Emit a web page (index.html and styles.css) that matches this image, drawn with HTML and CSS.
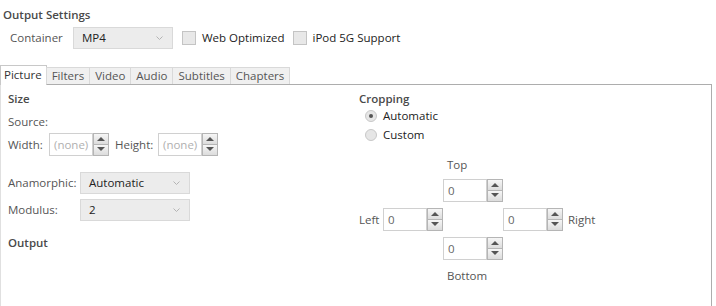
FILE: index.html
```html
<!DOCTYPE html>
<html lang="en">
<head>
    <meta charset="UTF-8">
    <title>Output Settings</title>
    <link rel="stylesheet" href="styles.css">
</head>
<body>
    <div class="settings-title">Output Settings</div>
    <div class="output-row">
        <span class="container-label">Container</span>
        <div class="combo combo-container">
            <span>MP4</span>
            <svg class="chevron" width="7" height="4" viewBox="0 0 7 4"><polyline points="0.5,0.5 3.5,3.5 6.5,0.5" fill="none" stroke="#b4b4b4" stroke-width="1"/></svg>
        </div>
        <label class="check"><span class="box"></span>Web Optimized</label>
        <label class="check"><span class="box"></span>iPod 5G Support</label>
    </div>

    <div class="tabs">
        <div class="tab active">Picture</div>
        <div class="tab">Filters</div>
        <div class="tab">Video</div>
        <div class="tab">Audio</div>
        <div class="tab">Subtitles</div>
        <div class="tab">Chapters</div>
    </div>

    <div class="panel">
        <div class="col-left">
            <div class="heading">Size</div>
            <div class="label source">Source:</div>
            <div class="size-row">
                <span class="label">Width:</span>
                <div class="spinner">
                    <div class="spin-input placeholder">(none)</div>
                    <div class="spin-btns"><span class="up"></span><span class="down"></span></div>
                </div>
                <span class="label height-label">Height:</span>
                <div class="spinner">
                    <div class="spin-input placeholder">(none)</div>
                    <div class="spin-btns"><span class="up"></span><span class="down"></span></div>
                </div>
            </div>
            <div class="combo-row first">
                <span class="label">Anamorphic:</span>
                <div class="combo combo-wide">
                    <span>Automatic</span>
                    <svg class="chevron" width="7" height="4" viewBox="0 0 7 4"><polyline points="0.5,0.5 3.5,3.5 6.5,0.5" fill="none" stroke="#b4b4b4" stroke-width="1"/></svg>
                </div>
            </div>
            <div class="combo-row">
                <span class="label">Modulus:</span>
                <div class="combo combo-wide">
                    <span>2</span>
                    <svg class="chevron" width="7" height="4" viewBox="0 0 7 4"><polyline points="0.5,0.5 3.5,3.5 6.5,0.5" fill="none" stroke="#b4b4b4" stroke-width="1"/></svg>
                </div>
            </div>
            <div class="heading output-heading">Output</div>
        </div>

        <div class="col-right">
            <div class="heading">Cropping</div>
            <label class="radio first"><span class="dot checked"></span>Automatic</label>
            <label class="radio"><span class="dot"></span>Custom</label>

            <div class="crop-grid">
                <div class="crop-top-label label">Top</div>
                <div class="crop-top">
                    <div class="spinner">
                        <div class="spin-input">0</div>
                        <div class="spin-btns"><span class="up"></span><span class="down"></span></div>
                    </div>
                </div>
                <div class="crop-left label">Left</div>
                <div class="crop-left-spin">
                    <div class="spinner">
                        <div class="spin-input">0</div>
                        <div class="spin-btns"><span class="up"></span><span class="down"></span></div>
                    </div>
                </div>
                <div class="crop-right-spin">
                    <div class="spinner">
                        <div class="spin-input">0</div>
                        <div class="spin-btns"><span class="up"></span><span class="down"></span></div>
                    </div>
                </div>
                <div class="crop-right label">Right</div>
                <div class="crop-bottom">
                    <div class="spinner">
                        <div class="spin-input">0</div>
                        <div class="spin-btns"><span class="up"></span><span class="down"></span></div>
                    </div>
                </div>
                <div class="crop-bottom-label label">Bottom</div>
            </div>
        </div>
    </div>
</body>
</html>
```

FILE: styles.css
```css
body {
    margin: 0;
    width: 716px;
    height: 306px;
    overflow: hidden;
    background-color: #fff;
    font-family: "Open Sans", "Noto Sans", sans-serif;
    font-size: 11.5px;
    line-height: 16px;
    color: #333;
}
.settings-title {
    font-weight: 600;
    color: #4a4a4a;
    padding: 7px 0 0 3px;
}
.output-row {
    display: flex;
    align-items: center;
    height: 22px;
    margin-top: 4px;
    padding-left: 10px;
}
.container-label {
    width: 63px;
    color: #555;
}
.combo {
    display: flex;
    align-items: center;
    justify-content: space-between;
    box-sizing: border-box;
    height: 22px;
    padding: 0 9px 0 8px;
    background-color: #ececec;
    border: 1px solid #d9d9d9;
    color: #222;
}
.combo-container {
    width: 100px;
}
.combo-wide {
    width: 110px;
    height: 22px;
}
.chevron {
    display: block;
}
.check {
    display: flex;
    align-items: center;
    margin-left: 9px;
    color: #222;
}
.check + .check {
    margin-left: 8px;
}
.box {
    width: 12px;
    height: 12px;
    margin-right: 6px;
    background-color: #e8e8e8;
    border: 1px solid #c4c4c4;
}
.tabs {
    display: flex;
    align-items: flex-end;
    height: 19px;
    margin-top: 16px;
    position: relative;
    z-index: 1;
}
.tab {
    box-sizing: border-box;
    height: 17px;
    padding: 0 5px;
    line-height: 15px;
    background-color: #f0f0f0;
    border: 1px solid #d9d9d9;
    border-bottom: none;
    margin-left: -1px;
    color: #555;
}
.tab.active {
    height: 20px;
    margin-left: 0;
    margin-bottom: -1px;
    padding: 0 4px 0 3px;
    line-height: 18px;
    background-color: #fff;
    border-color: #c8c8c8;
    color: #333;
}
.panel {
    display: flex;
    box-sizing: border-box;
    width: 712px;
    height: 222px;
    border: 1px solid #adadad;
    border-bottom: none;
    border-left-color: #e0e0e0;
    padding: 6px 0 0 7px;
}
.col-left {
    width: 351px;
}
.heading {
    font-weight: 600;
    color: #4a4a4a;
}
.label {
    color: #555;
}
.source {
    margin-top: 7px;
}
.size-row {
    display: flex;
    align-items: center;
    margin-top: 3px;
}
.size-row .label {
    width: 41px;
}
.size-row .height-label {
    width: 43px;
    margin-left: 6px;
}
.spinner {
    display: flex;
    height: 23px;
}
.spin-input {
    box-sizing: border-box;
    width: 44px;
    height: 23px;
    padding: 3px 0 0 4px;
    border: 1px solid #d0d0d0;
    color: #666;
}
.spin-input.placeholder {
    color: #b0b0b0;
}
.spin-btns {
    display: flex;
    flex-direction: column;
    width: 16px;
}
.spin-btns span {
    position: relative;
    box-sizing: border-box;
    height: 11.5px;
    border: 1px solid #b5b5b5;
    background: linear-gradient(#f6f6f6, #dcdcdc);
}
.spin-btns .down {
    border-top: none;
}
.spin-btns span::after {
    content: "";
    position: absolute;
    left: 3px;
    top: 3px;
    border-left: 4px solid transparent;
    border-right: 4px solid transparent;
}
.spin-btns .up::after {
    border-bottom: 4px solid #555;
}
.spin-btns .down::after {
    top: 2px;
    border-top: 4px solid #555;
}
.combo-row {
    display: flex;
    align-items: center;
    margin-top: 5px;
}
.combo-row.first {
    margin-top: 16px;
}
.combo-row .label {
    width: 72px;
}
.output-heading {
    margin-top: 14px;
}
.col-right {
    flex: 1;
}
.radio {
    display: flex;
    align-items: center;
    margin-left: 6px;
    margin-top: 3px;
    color: #222;
}
.radio.first {
    margin-top: 1px;
}
.dot {
    position: relative;
    box-sizing: border-box;
    width: 12px;
    height: 12px;
    margin-right: 6px;
    border: 1px solid #c8c8c8;
    border-radius: 50%;
    background-color: #e6e6e6;
}
.dot.checked::after {
    content: "";
    position: absolute;
    left: 3px;
    top: 3px;
    width: 4px;
    height: 4px;
    border-radius: 50%;
    background-color: #555;
}
.crop-grid {
    display: grid;
    grid-template-columns: 24px 60px 60px 60px auto;
    grid-template-rows: 16px 23px 23px 23px 16px;
    row-gap: 6px;
    margin-top: 14px;
    align-items: center;
}
.crop-top-label {
    grid-column: 3;
    grid-row: 1;
    padding-left: 4px;
}
.crop-top {
    grid-column: 3;
    grid-row: 2;
}
.crop-left {
    grid-column: 1;
    grid-row: 3;
}
.crop-left-spin {
    grid-column: 2;
    grid-row: 3;
}
.crop-right-spin {
    grid-column: 4;
    grid-row: 3;
}
.crop-right {
    grid-column: 5;
    grid-row: 3;
    padding-left: 5px;
}
.crop-bottom {
    grid-column: 3;
    grid-row: 4;
}
.crop-bottom-label {
    grid-column: 3;
    grid-row: 5;
    padding-left: 4px;
    margin-top: 4px;
}
```
